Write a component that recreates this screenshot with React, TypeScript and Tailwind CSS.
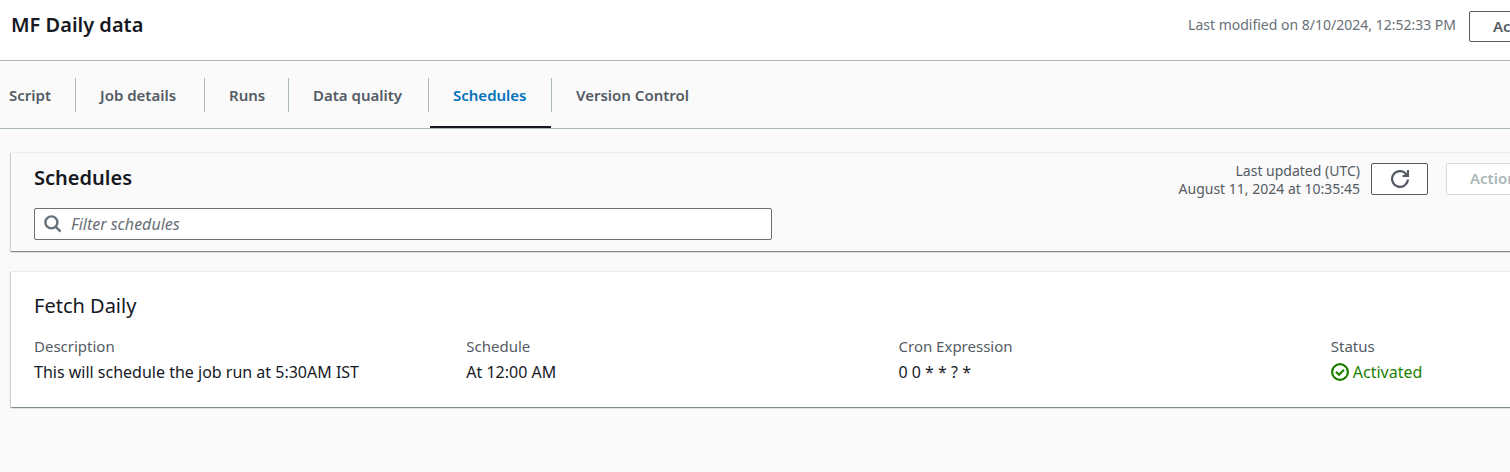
import React from "react";

const tabs = [
  { label: "Script", width: "w-[75px] pl-[9px]" },
  { label: "Job details", width: "w-[129px] pl-[25px]" },
  { label: "Runs", width: "w-[84px] pl-[25px]" },
  { label: "Data quality", width: "w-[140px] pl-[25px]" },
  { label: "Schedules", width: "w-[123px] pl-[25px]" },
  { label: "Version Control", width: "pl-[25px]" },
];

const cardShadow =
  "border-t border-[#eaeded] shadow-[0_1px_1px_0_rgba(0,28,36,0.3),1px_1px_1px_0_rgba(0,28,36,0.15),-1px_1px_1px_0_rgba(0,28,36,0.15)]";

function RefreshIcon() {
  return (
    <svg viewBox="0 0 18 18" className="size-[18px]" fill="none" stroke="currentColor" strokeWidth="2.2" aria-hidden="true">
      <path d="M16.9 9.5a7.9 7.9 0 1 1-1.8-5.6" />
      <path d="M11.5 6H17V0" />
      <path d="M14 3.5L16.5 5.5" />
    </svg>
  );
}

function SearchIcon() {
  return (
    <svg viewBox="0 0 18 18" className="size-[18px]" fill="none" stroke="currentColor" strokeWidth="2.4" aria-hidden="true">
      <circle cx="7.4" cy="7.4" r="6" />
      <path d="M11.6 11.6L16.6 16.6" />
    </svg>
  );
}

function CheckIcon() {
  return (
    <svg viewBox="0 0 18 18" className="size-[18px]" fill="none" stroke="currentColor" strokeWidth="2.2" aria-hidden="true">
      <circle cx="9" cy="9" r="7.9" />
      <path d="M5 8.7l3 3 5-5" />
    </svg>
  );
}

function Field({ label, children }: { label: string; children: React.ReactNode }) {
  return (
    <div>
      <dt className="text-[#545b64]">{label}</dt>
      <dd className="mt-1 text-base leading-[22px]">{children}</dd>
    </div>
  );
}

export default function App() {
  return (
    <div className="min-h-screen overflow-hidden bg-[#fafafa] font-['Noto_Sans',sans-serif] text-[15px] leading-[22px] text-[#16191f]">
      <header className="border-b border-[#aab7b8] bg-white">
        <div className="-mr-[71px] flex h-[60px] items-start justify-between pl-[11px] pt-[11px]">
          <h1 className="text-[20px] leading-7 font-semibold">MF Daily data</h1>
          <div className="flex gap-[13px]">
            <p className="text-[14px] leading-7 text-[#687078]">Last modified on 8/10/2024, 12:52:33 PM</p>
            <button className="h-[31px] w-28 rounded-xs border border-[#545b64] bg-white pb-0.5 pl-[23px] text-left font-semibold text-[#545b64]">
              Actions
            </button>
          </div>
        </div>
      </header>

      <nav className="flex h-[68px] border-b border-[#aab7b8]" aria-label="Job sections">
        {tabs.map((tab, i) => {
          const active = tab.label === "Schedules";
          return (
            <div key={tab.label} className={`relative flex items-center ${tab.width}`}>
              <a href="#" className={`whitespace-nowrap font-semibold ${active ? "text-[#0073bb]" : "text-[#545b64]"}`}>
                {tab.label}
              </a>
              {i < tabs.length - 1 && <span className="absolute right-0 h-[34px] w-px translate-x-px bg-[#aab7b8]" />}
              {active && <span className="absolute inset-x-0 bottom-0 ml-0.5 h-0.5 bg-[#16191f]" />}
            </div>
          );
        })}
      </nav>

      <main className="-mr-[256px] flex flex-col gap-5 pt-[23px] pl-[11px]">
        <section className={`bg-[#fafafa] px-[23px] pt-[9px] pb-[11px] ${cardShadow}`}>
          <div className="flex items-start justify-between">
            <h2 className="text-[20px] leading-8 font-semibold">Schedules</h2>
            <div className="mr-[185px] flex items-start">
              <p className="mr-[11px] text-right text-[14px] leading-[18px] text-[#545b64]">
                Last updated (UTC)
                <br />
                August 11, 2024 at 10:35:45
              </p>
              <button
                aria-label="Refresh"
                className="mt-px mr-[18px] flex h-8 w-[57px] items-center justify-center rounded-xs border border-[#545b64] bg-white text-[#545b64]"
              >
                <RefreshIcon />
              </button>
              <button
                disabled
                className="mt-px h-8 w-28 rounded-xs border border-[#d5dbdb] bg-white pb-0.5 pl-[23px] text-left font-semibold text-[#aab7b8]"
              >
                Actions
              </button>
            </div>
          </div>
          <label className="mt-[10px] flex h-8 w-[738px] items-center gap-[9px] rounded-xs border border-[#687078] bg-white px-[9px] text-[#687078]">
            <SearchIcon />
            <input
              type="search"
              aria-label="Filter schedules"
              placeholder="Filter schedules"
              className="min-w-0 flex-1 bg-transparent text-base outline-none placeholder:text-[#687078] placeholder:italic"
            />
          </label>
        </section>

        <section className={`bg-white px-[23px] pt-5 pb-6 ${cardShadow}`}>
          <h3 className="text-[20px] leading-7">Fetch Daily</h3>
          <dl className="mt-[15px] grid grid-cols-4 gap-5">
            <Field label="Description">This will schedule the job run at 5:30AM IST</Field>
            <Field label="Schedule">At 12:00 AM</Field>
            <Field label="Cron Expression">0 0 * * ? *</Field>
            <Field label="Status">
              <span className="flex items-center gap-1 text-[#1d8102]">
                <CheckIcon />
                Activated
              </span>
            </Field>
          </dl>
        </section>
      </main>
    </div>
  );
}
